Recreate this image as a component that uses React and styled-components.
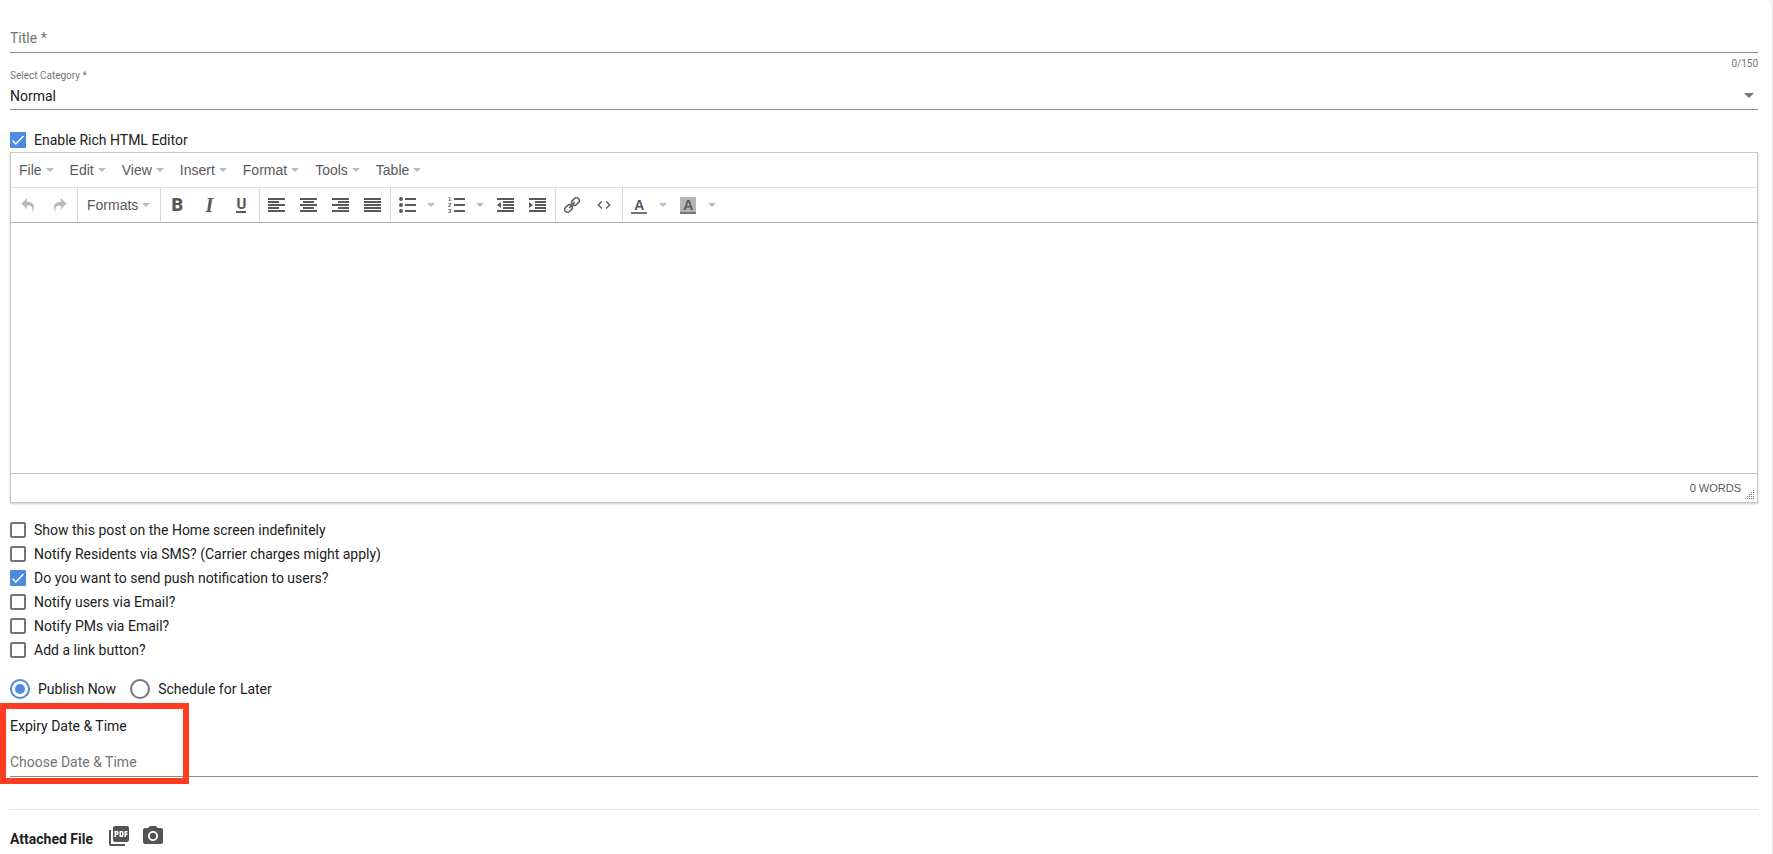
import React from 'react'
import styled, { createGlobalStyle, css } from 'styled-components'
import { MdCameraAlt, MdCode, MdPictureAsPdf } from 'react-icons/md'

const GlobalStyle = createGlobalStyle`
  *, *::before, *::after {
    box-sizing: border-box;
  }

  body {
    margin: 0;
    background-color: #f5f5f5;
    color: #212121;
    font-family: Roboto, "Liberation Sans", sans-serif;
    font-size: 14px;
    line-height: 16px;
  }

  input, select, textarea, button {
    font: inherit;
    color: inherit;
  }
`

const Card = styled.form`
  position: relative;
  min-height: 100vh;
  padding: 28px 14px 0 10px;
  background-color: #fff;
  border-right: 1px solid #e4e4e4;
  border-top-right-radius: 6px;
`

const Field = styled.div`
  display: flex;
  flex-direction: column;
`

const TextInput = styled.input`
  width: 100%;
  height: 25px;
  padding: 0 0 4px;
  border: 0;
  border-bottom: 1px solid #8c8c8c;
  border-radius: 0;
  background: transparent;
  outline: none;

  &::placeholder {
    color: #757575;
    opacity: 1;
  }
`

const Counter = styled.span`
  align-self: flex-end;
  padding-top: 5px;
  color: #757575;
  font-size: 10px;
  line-height: 12px;
`

const SmallLabel = styled.label`
  color: #757575;
  font-size: 10px;
  line-height: 12px;
`

const SelectBox = styled.div`
  display: grid;
  align-items: center;
  height: 28px;
  border-bottom: 1px solid #8c8c8c;

  > * {
    grid-area: 1 / 1;
  }
`

const Select = styled.select`
  width: 100%;
  height: 26px;
  padding: 0;
  border: 0;
  appearance: none;
  background: transparent;
  outline: none;
`

const Arrow = styled.span`
  flex: none;
  width: 0;
  height: 0;
  border: 4px solid transparent;
  border-top-color: #b5bcc2;
  border-bottom: 0;
`

const SelectArrow = styled(Arrow)`
  justify-self: end;
  margin-right: 4px;
  border-width: 5px 5px 0;
  border-top-color: #757575;
  pointer-events: none;
`

const CheckLabel = styled.label`
  display: flex;
  align-items: center;
  gap: 8px;
  height: 24px;
  cursor: pointer;
`

const CheckBox = styled.span`
  display: grid;
  width: 16px;
  height: 16px;

  > * {
    grid-area: 1 / 1;
  }

  svg {
    z-index: 1;
    pointer-events: none;
  }
`

const CheckInput = styled.input`
  width: 16px;
  height: 16px;
  margin: 0;
  appearance: none;
  border: 2px solid #757575;
  border-radius: 2px;

  &:checked {
    border-color: #4d8ae0;
    border-radius: 1px;
    background-color: #4d8ae0;
  }

  &:not(:checked) + svg {
    visibility: hidden;
  }
`

const EnableRow = styled.div`
  padding: 18px 0 0;
`

const CheckList = styled.div`
  padding: 15px 0 0;
`

const Editor = styled.div`
  border: 1px solid #c5c5c5;
  box-shadow: 0 1px 2px rgba(0, 0, 0, 0.2);
  color: #595959;
  font-family: "Liberation Sans", Arial, sans-serif;
`

const MenuBar = styled.div`
  display: flex;
  height: 35px;
  border-bottom: 1px solid #e2e2e2;
`

const MenuButton = styled.button`
  display: flex;
  align-items: center;
  gap: 4px;
  padding: 0 8px;
  border: 0;
  background: none;
`

const Toolbar = styled.div`
  display: flex;
  height: 35px;
  border-bottom: 1px solid #b0b0b0;
`

const Group = styled.div`
  display: flex;
  padding-right: 2px;

  & + & {
    border-left: 1px solid #d9d9d9;
  }
`

const ToolButton = styled.button`
  display: flex;
  align-items: center;
  justify-content: center;
  width: 32px;
  padding: 0;
  border: 0;
  background: none;
  color: ${props => (props.disabled ? '#b9b9b9' : '#595959')};
`

const FormatsButton = styled(MenuButton)`
  padding: 0 8px 0 9px;
`

const OpenButton = styled(ToolButton)`
  width: 17px;
  padding-right: 2px;
`

const glyph = css`
  font-weight: 700;
  line-height: 16px;
`

const Bold = styled.span`
  ${glyph}
  font-family: Roboto, sans-serif;
  font-size: 18px;
  font-weight: 900;
`

const Italic = styled.span`
  ${glyph}
  font-family: "Liberation Serif", serif;
  font-size: 20px;
  font-style: italic;
`

const Underline = styled.span`
  height: 15px;
  border-bottom: 2px solid #595959;
  font-family: Roboto, sans-serif;
  font-size: 15px;
  font-weight: 700;
  line-height: 13px;
`

const ColorLetter = styled.span`
  width: 16px;
  height: 17px;
  border-bottom: 2px solid #757575;
  background-color: ${props => (props.$filled ? '#b5b5b5' : 'transparent')};
  font-size: 14px;
  font-weight: 700;
  line-height: 16px;
`

const Content = styled.textarea`
  display: block;
  width: 100%;
  height: 250px;
  padding: 8px;
  border: 0;
  outline: none;
  resize: none;
`

const StatusBar = styled.div`
  display: flex;
  align-items: center;
  justify-content: flex-end;
  gap: 4px;
  height: 29px;
  padding-right: 2px;
  border-top: 1px solid #c5c5c5;
  font-size: 11px;

  svg {
    align-self: flex-end;
    margin-bottom: 2px;
  }
`

const RadioRow = styled.div`
  display: flex;
  gap: 14px;
  padding-top: 17px;
`

const RadioLabel = styled.label`
  display: flex;
  align-items: center;
  gap: 8px;
  cursor: pointer;
`

const RadioInput = styled.input`
  display: grid;
  place-items: center;
  width: 20px;
  height: 20px;
  margin: 0;
  appearance: none;
  border: 2px solid #757575;
  border-radius: 50%;

  &:checked {
    border-color: #4d8ae0;
  }

  &:checked::before {
    content: "";
    width: 10px;
    height: 10px;
    border-radius: 50%;
    background-color: #4d8ae0;
  }
`

const Expiry = styled.div`
  position: relative;
  display: flex;
  flex-direction: column;
  gap: 18px;
  padding-top: 19px;
`

const Highlight = styled.div`
  position: absolute;
  top: 4px;
  bottom: -7px;
  left: -10px;
  width: 189px;
  border: 6px solid #ff3b20;
  pointer-events: none;
`

const Divider = styled.hr`
  margin: 32px 0 0;
  border: 0;
  border-top: 1px solid #e0e0e0;
`

const Attached = styled.div`
  display: flex;
  align-items: center;
  gap: 10px;
  padding-top: 14px;
`

const AttachedTitle = styled.strong`
  padding: 6px 4px 0 0;
`

const IconButton = styled.button`
  display: flex;
  padding: 0;
  border: 0;
  background: none;
  color: #545454;
`

const Check = ({ label, checked }) => (
  <CheckLabel>
    <CheckBox>
      <CheckInput type="checkbox" defaultChecked={checked} />
      <svg width="16" height="16" viewBox="0 0 16 16" fill="none">
        <path d="M2.5 8.5l3.3 3.5 7.7-8" stroke="#fff" strokeWidth="1.4" />
      </svg>
    </CheckBox>
    {label}
  </CheckLabel>
)

// each bar is [x, width], stacked 3px apart
const Bars = ({ rows, children }) => (
  <svg width="17" height="14" viewBox="0 0 17 14" fill="currentColor">
    {rows.map(([x, width], i) => (
      <rect key={i} x={x} y={i * 3} width={width} height="2" />
    ))}
    {children}
  </svg>
)

const FULL = [0, 17]
const ALIGNS = [
  ['Align left', [FULL, [0, 11], FULL, [0, 11], FULL]],
  ['Align center', [FULL, [3, 11], FULL, [3, 11], FULL]],
  ['Align right', [FULL, [6, 11], FULL, [6, 11], FULL]],
  ['Justify', [FULL, FULL, FULL, FULL, FULL]]
]
const INDENTS = [FULL, [6, 11], [6, 11], [6, 11], FULL]

const UndoIcon = () => (
  <svg width="16" height="15" viewBox="-64 0 1024 1024" fill="currentColor">
    <path d="M761.862 1024c113.726-206.032 132.888-520.306-313.862-509.824v253.824l-384-384 384-384v248.372c534.962-13.942 594.57 472.214 313.862 775.628z" />
  </svg>
)

const RedoIcon = () => (
  <svg width="16" height="15" viewBox="-64 0 1024 1024" fill="currentColor">
    <path d="M576 248.372v-248.372l384 384-384 384v-253.824c-446.75-10.482-427.588 303.792-313.86 509.824-280.712-303.414-221.1-789.57 313.86-775.628z" />
  </svg>
)

const BulletIcon = () => (
  <svg width="17" height="16" viewBox="0 0 17 16" fill="currentColor">
    {[2, 8, 14].map(y => (
      <g key={y}>
        <circle cx="2" cy={y} r="2" />
        <rect x="6" y={y - 1} width="11" height="2" />
      </g>
    ))}
  </svg>
)

const NumberIcon = () => (
  <svg width="17" height="16" viewBox="0 0 17 16" fill="currentColor">
    {[2, 8, 14].map((y, i) => (
      <g key={y}>
        <text x="0" y={y + 2} fontSize="6" fontWeight="700">{i + 1}</text>
        <rect x="6" y={y - 1} width="11" height="2" />
      </g>
    ))}
  </svg>
)

const LinkIcon = () => (
  <svg width="16" height="16" viewBox="0 0 16 16" fill="none" stroke="currentColor" strokeWidth="1.5">
    <g transform="rotate(-45 8 8)">
      <rect x="-1" y="5.2" width="8.2" height="5.6" rx="2.6" />
      <rect x="8.8" y="5.2" width="8.2" height="5.6" rx="2.6" />
      <path d="M4.5 8h7" strokeLinecap="round" />
    </g>
  </svg>
)

const GripIcon = () => (
  <svg width="10" height="10" viewBox="0 0 10 10" fill="#777">
    {[0, 1, 2, 3, 4].map(row =>
      Array.from({ length: row + 1 }, (_, i) => (
        <rect key={`${row}-${i}`} x={8 - i * 2} y={row * 2} width="1" height="1" />
      ))
    )}
  </svg>
)

const Tool = ({ label, children, ...rest }) => (
  <ToolButton type="button" aria-label={label} {...rest}>{children}</ToolButton>
)

const Open = ({ label }) => (
  <OpenButton type="button" aria-label={label}><Arrow /></OpenButton>
)

const MENUS = ['File', 'Edit', 'View', 'Insert', 'Format', 'Tools', 'Table']

const RichEditor = () => (
  <Editor>
    <MenuBar>
      {MENUS.map(menu => (
        <MenuButton key={menu} type="button">{menu}<Arrow /></MenuButton>
      ))}
    </MenuBar>
    <Toolbar>
      <Group>
        <Tool label="Undo" disabled><UndoIcon /></Tool>
        <Tool label="Redo" disabled><RedoIcon /></Tool>
      </Group>
      <Group>
        <FormatsButton type="button">Formats<Arrow /></FormatsButton>
      </Group>
      <Group>
        <Tool label="Bold"><Bold>B</Bold></Tool>
        <Tool label="Italic"><Italic>I</Italic></Tool>
        <Tool label="Underline"><Underline>U</Underline></Tool>
      </Group>
      <Group>
        {ALIGNS.map(([label, rows]) => (
          <Tool key={label} label={label}><Bars rows={rows} /></Tool>
        ))}
      </Group>
      <Group>
        <Tool label="Bullet list"><BulletIcon /></Tool>
        <Open label="Bullet styles" />
        <Tool label="Numbered list"><NumberIcon /></Tool>
        <Open label="Number styles" />
        <Tool label="Decrease indent"><Bars rows={INDENTS}><path d="M4 4v6L0 7z" /></Bars></Tool>
        <Tool label="Increase indent"><Bars rows={INDENTS}><path d="M0 4v6l4-3z" /></Bars></Tool>
      </Group>
      <Group>
        <Tool label="Insert link"><LinkIcon /></Tool>
        <Tool label="Source code"><MdCode size={16} /></Tool>
      </Group>
      <Group>
        <Tool label="Text color"><ColorLetter>A</ColorLetter></Tool>
        <Open label="Text colors" />
        <Tool label="Background color"><ColorLetter $filled>A</ColorLetter></Tool>
        <Open label="Background colors" />
      </Group>
    </Toolbar>
    <Content aria-label="Post content" />
    <StatusBar>
      <span>0 WORDS</span>
      <GripIcon />
    </StatusBar>
  </Editor>
)

const App = () => (
  <>
    <GlobalStyle />
    <Card>
      <Field>
        <TextInput aria-label="Title" placeholder="Title *" maxLength={150} />
        <Counter>0/150</Counter>
      </Field>
      <Field>
        <SmallLabel htmlFor="category">Select Category *</SmallLabel>
        <SelectBox>
          <Select id="category" defaultValue="Normal">
            <option>Normal</option>
          </Select>
          <SelectArrow />
        </SelectBox>
      </Field>
      <EnableRow>
        <Check label="Enable Rich HTML Editor" checked />
      </EnableRow>
      <RichEditor />
      <CheckList>
        <Check label="Show this post on the Home screen indefinitely" />
        <Check label="Notify Residents via SMS? (Carrier charges might apply)" />
        <Check label="Do you want to send push notification to users?" checked />
        <Check label="Notify users via Email?" />
        <Check label="Notify PMs via Email?" />
        <Check label="Add a link button?" />
      </CheckList>
      <RadioRow>
        <RadioLabel>
          <RadioInput type="radio" name="publish" defaultChecked />
          Publish Now
        </RadioLabel>
        <RadioLabel>
          <RadioInput type="radio" name="publish" />
          Schedule for Later
        </RadioLabel>
      </RadioRow>
      <Expiry>
        <label htmlFor="expiry">Expiry Date &amp; Time</label>
        <TextInput id="expiry" placeholder="Choose Date &amp; Time" />
        <Highlight />
      </Expiry>
      <Divider />
      <Attached>
        <AttachedTitle>Attached File</AttachedTitle>
        <IconButton type="button" aria-label="Attach PDF"><MdPictureAsPdf size={24} /></IconButton>
        <IconButton type="button" aria-label="Attach photo"><MdCameraAlt size={24} /></IconButton>
      </Attached>
    </Card>
  </>
)

export default App
